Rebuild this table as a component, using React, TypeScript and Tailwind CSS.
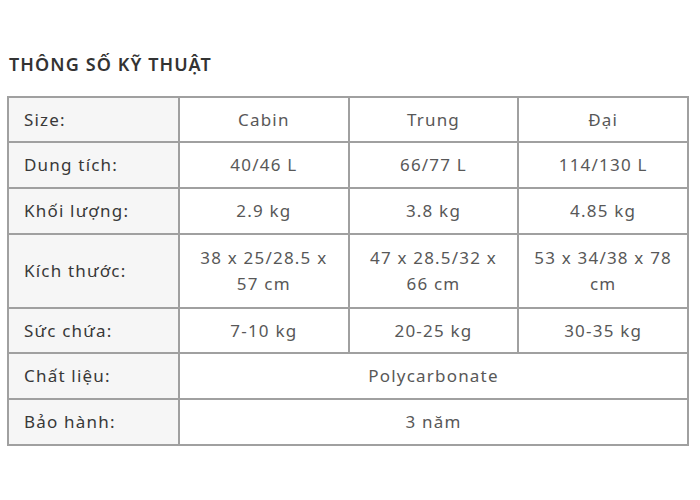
import React from "react";

const rows: { label: string; values: string[]; h: string }[] = [
  { label: "Size:", values: ["Cabin", "Trung", "Đại"], h: "h-[45px]" },
  { label: "Dung tích:", values: ["40/46 L", "66/77 L", "114/130 L"], h: "h-[46px]" },
  { label: "Khối lượng:", values: ["2.9 kg", "3.8 kg", "4.85 kg"], h: "h-[46px]" },
  { label: "Kích thước:", values: ["38 x 25/28.5 x 57 cm", "47 x 28.5/32 x 66 cm", "53 x 34/38 x 78 cm"], h: "h-[74px]" },
  { label: "Sức chứa:", values: ["7-10 kg", "20-25 kg", "30-35 kg"], h: "h-[45px]" },
  { label: "Chất liệu:", values: ["Polycarbonate"], h: "h-[46px]" },
  { label: "Bảo hành:", values: ["3 năm"], h: "h-[46px]" },
];

export default function App() {
  return (
    <div
      className="w-[700px] h-[500px] bg-white pt-[50px] pl-[7px]"
      style={{ fontFamily: '"Noto Sans", sans-serif' }}
    >
      <h2 className="pl-[2px] text-[18px] leading-[28px] font-semibold text-[#333333] tracking-[1.1px]">
        THÔNG SỐ KỸ THUẬT
      </h2>
      <table className="mt-[18px] w-[682px] table-fixed border-collapse border-2 border-[#a0a0a0] text-[17px] leading-[26px] tracking-[1.2px]">
        <tbody>
          {rows.map((r) => (
            <tr key={r.label} className={r.h}>
              <th className="w-[171px] border-2 border-[#a0a0a0] bg-[#f6f6f6] pl-[15px] text-left font-normal text-[#383838]">
                {r.label}
              </th>
              {r.values.length === 1 ? (
                <td colSpan={3} className="border-2 border-[#a0a0a0] text-center text-[#585858]">
                  {r.values[0]}
                </td>
              ) : (
                r.values.map((v, i) => (
                  <td key={i} className="border-2 border-[#a0a0a0] px-[11px] text-center text-[#585858]">
                    {v}
                  </td>
                ))
              )}
            </tr>
          ))}
        </tbody>
      </table>
    </div>
  );
}
